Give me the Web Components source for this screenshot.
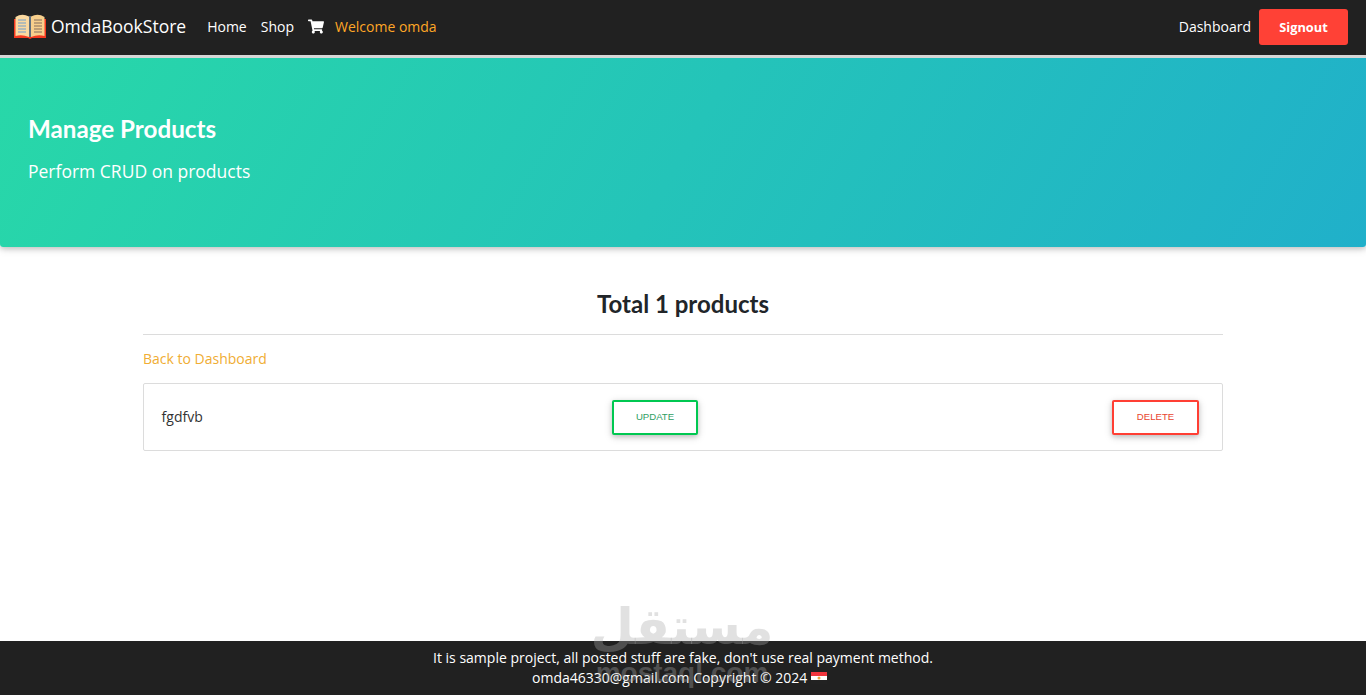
<!DOCTYPE html>
<html>
<head>
<meta charset="utf-8">
<title>Manage Products</title>
<style>
  html, body { margin: 0; height: 100%; }
  body { font-family: "Open Sans", sans-serif; color: #212529; background: #fff; }
  #page { height: 695px; display: flex; flex-direction: column; position: relative; overflow: hidden; }
</style>
</head>
<body>
<div id="page">
  <omda-nav></omda-nav>
  <omda-hero title="Manage Products" description="Perform CRUD on products"></omda-hero>
  <product-list total="1">
    <product-row name="fgdfvb"></product-row>
  </product-list>
  <omda-footer></omda-footer>
  <omda-watermark></omda-watermark>
</div>

<script>
(function() {

  // Small helper so every element is set up the same way
  function define(name, html, extra) {
    const template = document.createElement('template');
    template.innerHTML = html;
    class Element extends HTMLElement {
      constructor() {
        super();
        this.attachShadow({mode: 'open'});
        this.shadowRoot.appendChild(template.content.cloneNode(true));
      }
      connectedCallback() {
        if (extra) extra(this, this.shadowRoot);
      }
    }
    customElements.define(name, Element);
  }

  // Top navigation bar
  define('omda-nav', `
    <style>
      :host {
        display: flex;
        flex: none;
        align-items: center;
        justify-content: space-between;
        height: 55px;
        padding: 0 18px 0 14px;
        background: #212121;
        color: #fff;
        box-shadow: 0 3px 0 #d6d6d6;
        position: relative;
        z-index: 1;
        font-size: 14px;
      }
      .side { display: flex; align-items: center; padding-bottom: 2px; }
      .brand { display: flex; align-items: center; font-size: 17.5px; margin-right: 21px; margin-top: -2px; }
      .brand svg { margin-right: 5px; margin-top: 1px; }
      a { color: inherit; text-decoration: none; }
      .link { margin-right: 14px; }
      .cart { display: flex; margin: 0 11px 0 0; }
      .welcome { color: #ffa726; }
      .signout {
        margin-left: 8px;
        width: 89px;
        height: 36px;
        display: flex;
        align-items: center;
        justify-content: center;
        background: #ff4136;
        border-radius: 3px;
        font-size: 12.8px;
        font-weight: 700;
      }
    </style>
    <div class="side">
      <a class="brand" href="#">
        <svg width="32" height="25" viewBox="0 0 32 25">
          <path d="M0 5h32v19H18l-2 1-2-1H0z" fill="#f4391f"/>
          <path d="M1.500 3Q8 -1 15 2.500V23Q8 20 1.500 22z" fill="#fbd9a0"/>
          <path d="M17 2.500Q24 -1 30.500 3V22Q24 20 17 23z" fill="#f7cf8c"/>
          <path d="M15 2h2v21h-2z" fill="#5f6f7e"/>
          <path d="M4 6h8M4 9h8M4 12h8M4 15h8M4 18h8" stroke="#9fb3bd" stroke-width="1.500"/>
          <path d="M20 6h8M20 9h8M20 12h8M20 15h8M20 18h8" stroke="#ab8f6c" stroke-width="1.500"/>
        </svg>
        OmdaBookStore
      </a>
      <a class="link" href="#">Home</a>
      <a class="link" href="#">Shop</a>
      <a class="cart" href="#">
        <svg width="16" height="15" viewBox="0 0 576 512"><path fill="#fff" d="M528 301.300l47.300-208C578.700 78.300 567.300 64 552 64H159.200l-9.200-44.800C147.800 8 137.900 0 126.500 0H24C10.700 0 0 10.700 0 24v16c0 13.300 10.700 24 24 24h69.900l70.200 343.400C147.300 417.100 136 435.200 136 456c0 30.900 25.100 56 56 56s56-25.100 56-56c0-15.700-6.400-29.800-16.800-40h209.600C430.400 426.200 424 440.300 424 456c0 30.900 25.100 56 56 56s56-25.100 56-56c0-22.200-12.900-41.300-31.600-50.400l5.500-24.300c3.400-15-8-29.300-23.400-29.300H218.100l-6.500-32h293c11.200 0 20.900-7.800 23.400-18.700z"/></svg>
      </a>
      <span class="welcome">Welcome omda</span>
    </div>
    <div class="side">
      <a href="#">Dashboard</a>
      <a class="signout" href="#">Signout</a>
    </div>
  `);

  // Gradient page header
  define('omda-hero', `
    <style>
      :host {
        display: block;
        flex: none;
        height: 189px;
        box-sizing: border-box;
        margin-top: 3px;
        padding: 56px 28px 0;
        background: linear-gradient(120deg, #28d8a8, #20b0ca);
        border-radius: 0 0 3px 3px;
        box-shadow: 0 2px 5px rgba(0,0,0,.16), 0 2px 10px rgba(0,0,0,.12);
        color: #fff;
      }
      h2 { margin: 0; font: 700 24.2px/30px Lato, sans-serif; }
      p { margin: 14px 0 0; font: 400 17.5px/26px "Open Sans", sans-serif; }
    </style>
    <h2 id="title"></h2>
    <p id="description"></p>
  `, (el, root) => {
    root.getElementById('title').textContent = el.getAttribute('title');
    root.getElementById('description').textContent = el.getAttribute('description');
  });

  // Product listing under the header
  define('product-list', `
    <style>
      :host { display: block; flex: 1; width: 1080px; margin: 0 auto; }
      h2 { margin: 41px 0 0; text-align: center; font: 700 24px/31px Lato, sans-serif; color: #212529; }
      hr { margin: 15px 0 0; border: 0; border-top: 1px solid #dcdcdc; }
      a { display: block; margin-top: 14px; font-size: 14px; line-height: 19px; color: #f0ad33; text-decoration: none; }
      ul { list-style: none; margin: 15px 0 0; padding: 0; border: 1px solid #dcdcdc; border-radius: 2px; }
    </style>
    <h2>Total <span id="total"></span> products</h2>
    <hr>
    <a href="#">Back to Dashboard</a>
    <ul><slot></slot></ul>
  `, (el, root) => {
    root.getElementById('total').textContent = el.getAttribute('total');
  });

  // One product with its two actions
  define('product-row', `
    <style>
      :host {
        display: grid;
        grid-template-columns: 450px 1fr auto;
        align-items: center;
        height: 66px;
        padding: 0 23px 0 18px;
        font-size: 14px;
        color: #333;
      }
      #name { margin-top: -2px; margin-left: -0.4px; }
      .btn {
        justify-self: start;
        box-sizing: border-box;
        width: 86px;
        height: 35px;
        display: flex;
        align-items: center;
        justify-content: center;
        background: #fff;
        border: 2px solid currentColor;
        border-radius: 2px;
        box-shadow: 0 2px 5px rgba(0,0,0,.18), 0 2px 10px rgba(0,0,0,.12);
        font: 400 9.6px "Liberation Sans", Arial, sans-serif;
        text-transform: uppercase;
      }
      .update { color: #00c851; }
      .update span { color: #2f9e63; }
      .delete { color: #ff3f34; width: 87px; }
      .delete span { color: #e8452f; }
      .btn span { margin-top: -1px; }
    </style>
    <span id="name"></span>
    <span class="btn update"><span>Update</span></span>
    <span class="btn delete"><span>Delete</span></span>
  `, (el, root) => {
    root.getElementById('name').textContent = el.getAttribute('name');
  });

  // Page footer
  define('omda-footer', `
    <style>
      :host {
        display: block;
        flex: none;
        height: 54px;
        box-sizing: border-box;
        padding-top: 7px;
        background: #212121;
        color: #fff;
        text-align: center;
        font-size: 14px;
        line-height: 20px;
      }
      svg { vertical-align: -1px; margin-right: 7px; }
    </style>
    <div>It is sample project, all posted stuff are fake, don't use real payment method.</div>
    <div>omda46330@gmail.com Copyright © 2024
      <svg width="16" height="12" viewBox="0 0 16 12">
        <rect width="16" height="4" fill="#f0353d"/>
        <rect y="4" width="16" height="4" fill="#fff"/>
        <rect y="8" width="16" height="4" fill="#222"/>
        <circle cx="8" cy="6" r="1.500" fill="#e8a33d"/>
      </svg>
    </div>
  `);

  // Site watermark lying over the page
  define('omda-watermark', `
    <style>
      :host {
        position: absolute;
        left: 582px;
        top: 596px;
        width: 200px;
        text-align: center;
        color: rgba(170,170,170,.35);
        pointer-events: none;
        z-index: 2;
      }
      .ar { font: 700 50px/62px "DejaVu Sans", sans-serif; }
      .en { margin-top: 0; font: 700 28px/30px "Liberation Sans", sans-serif; }
    </style>
    <div class="ar" dir="rtl">مستقل</div>
    <div class="en">mostaql.com</div>
  `);

})();
</script>
</body>
</html>
